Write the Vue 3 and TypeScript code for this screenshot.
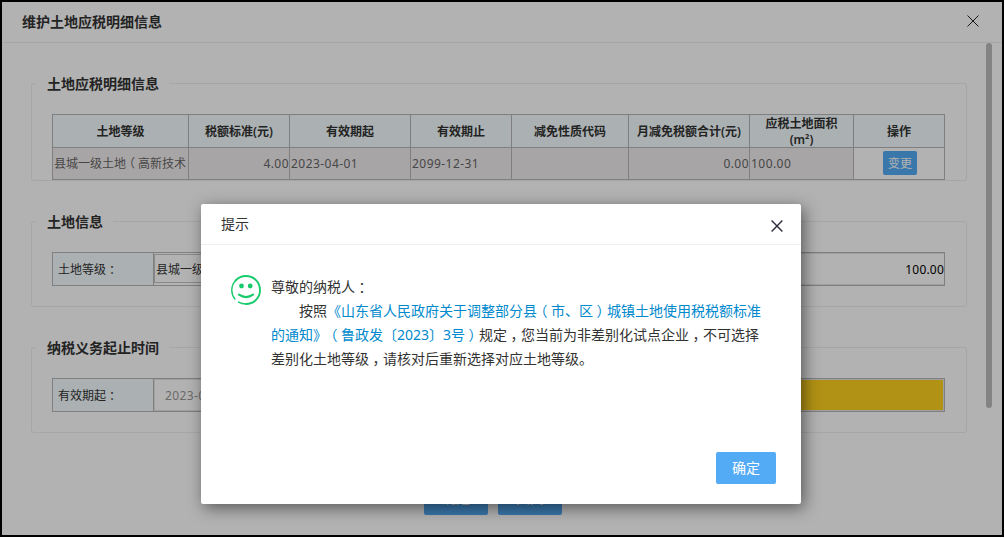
<script setup lang="ts">
import { h } from 'vue'

interface Column {
  title: string
  value: string
  align: 'left' | 'right'
}

const columns: Column[] = [
  { title: '土地等级', value: '县城一级土地（高新技术', align: 'left' },
  { title: '税额标准(元)', value: '4.00', align: 'right' },
  { title: '有效期起', value: '2023-04-01', align: 'left' },
  { title: '有效期止', value: '2099-12-31', align: 'left' },
  { title: '减免性质代码', value: '', align: 'left' },
  { title: '月减免税额合计(元)', value: '0.00', align: 'right' },
  { title: '应税土地面积(m²)', value: '100.00', align: 'left' },
]

// Full-width marks are centred in their cell.
const Cjk = (props: { text: string }) =>
  props.text
    .split(/([（），：])/)
    .filter(Boolean)
    .map((part) => (/^[（），：]$/.test(part) ? h('span', { class: 'mark' }, part) : part))
Cjk.props = ['text']
</script>

<template>
  <div class="window">
    <header class="title-bar">
      <h1>维护土地应税明细信息</h1>
      <svg class="close" width="12" height="12" viewBox="0 0 12 12">
        <path d="M.5 .5 11.5 11.5M11.5 .5 .5 11.5" fill="none" stroke="#222" stroke-width="1" />
      </svg>
    </header>

    <main class="content">
      <section class="group group-table">
        <h2>土地应税明细信息</h2>
        <div class="table">
          <div v-for="c in columns" :key="c.title" class="th">{{ c.title }}</div>
          <div class="th">操作</div>
          <div v-for="c in columns" :key="c.title + 'v'" class="td" :class="[c.align, { num: c.title !== '土地等级' }]"><Cjk :text="c.value" /></div>
          <div class="td action"><button class="mini">变更</button></div>
        </div>
      </section>

      <section class="group group-form">
        <h2>土地信息</h2>
        <div class="form-row">
          <label><Cjk text="土地等级：" /></label>
          <div class="field"><div class="input select">县城一级土地</div></div>
          <div class="field"><div class="input amount">100.00</div></div>
        </div>
      </section>

      <section class="group group-form">
        <h2>纳税义务起止时间</h2>
        <div class="form-row">
          <label><Cjk text="有效期起：" /></label>
          <div class="field"><div class="input date">2023-04-01</div></div>
          <div class="field"><div class="input required"></div></div>
        </div>
      </section>

      <div class="actions">
        <button class="btn">确定</button>
        <button class="btn">关闭</button>
      </div>
    </main>
    <div class="scroll-thumb"></div>

    <div class="shade"></div>

    <div class="dialog">
      <div class="dialog-head">
        <span>提示</span>
        <svg width="12" height="12" viewBox="0 0 12 12">
          <path d="M.6 .6 11.4 11.4M11.4 .6 .6 11.4" fill="none" stroke="#2e2d3c" stroke-width="1.4" />
        </svg>
      </div>
      <div class="dialog-body">
        <svg class="smile" width="30" height="30" viewBox="0 0 30 30">
          <g fill="none" stroke="#16cb6c" stroke-linecap="round">
            <path d="M3.9 24A14.1 14.1 0 0 1 4.6 5.5" stroke-width="1.4" />
            <path d="M4.6 5.5A14.1 14.1 0 0 1 15 1C23 1 29 7.2 29 15S23 29 15 29" stroke-width="1.9" />
            <path d="M15 29Q10.8 29 7.5 27.2" stroke-width="1.4" />
            <path d="M8 19.7Q15 24.4 22 19.7" stroke-width="2.2" />
          </g>
          <circle cx="10.5" cy="11" r="2.4" fill="#16cb6c" />
          <circle cx="19.2" cy="11" r="2.4" fill="#16cb6c" />
        </svg>
        <div class="message">
          <p><Cjk text="尊敬的纳税人：" /></p>
          <p class="indent">按照<a><Cjk text="《山东省人民政府关于调整部分县（市、区）城镇土地使用税税额标准" /></a></p>
          <p><a><Cjk text="的通知》（鲁政发〔2023〕3号）" /></a><Cjk text="规定，您当前为非差别化试点企业，不可选择" /></p>
          <p><Cjk text="差别化土地等级，请核对后重新选择对应土地等级。" /></p>
        </div>
      </div>
      <div class="dialog-foot"><button class="btn confirm">确定</button></div>
    </div>
  </div>
</template>

<style scoped>
* {
  box-sizing: border-box;
  margin: 0;
}
.window {
  position: relative;
  width: 1004px;
  height: 537px;
  border: 2px solid #000;
  background: #fff;
  overflow: hidden;
  color: #333;
  font: 12px/17px "Noto Sans", "Noto Sans CJK SC", sans-serif;
  text-spacing-trim: space-all;
}
.window :deep(.mark) {
  display: inline-block;
  width: 1em;
  text-align: center;
  font-feature-settings: "halt";
}
.title-bar {
  display: flex;
  justify-content: space-between;
  align-items: center;
  height: 41px;
  padding: 0 23px 2px 20px;
  border-bottom: 1px solid #eee;
}
h1,
h2 {
  font-size: 14px;
  line-height: 20px;
  font-weight: 600;
}
h1 {
  padding-top: 2px;
}
.close {
  display: block;
}
.content {
  padding: 40px 35px 0 29px;
}
.group {
  border: 1px solid #eee;
  border-radius: 3px;
  padding: 0 21px 0 20px;
}
h2 {
  width: max-content;
  height: 20px;
  margin: -10px 0 0 -16px;
  padding: 0 10px 0 11px;
  background: #fff;
}
.group-table {
  height: 98px;
}
.group-form {
  height: 86px;
  margin-top: 40px;
}
.table {
  display: grid;
  grid-template-columns: 136px 101px 121px 101px 117px 121px 104px 91px;
  grid-template-rows: 33px 32px;
  width: 893px;
  margin-top: 20px;
  border: solid #b6b6b6;
  border-width: 1px 0 0 1px;
}
.th,
.td {
  display: flex;
  align-items: center;
  border: solid #b6b6b6;
  border-width: 0 1px 1px 0;
  white-space: nowrap;
  overflow: hidden;
}
.th {
  justify-content: center;
  padding: 1px 15px 0;
  background: #f5fdff;
  font-weight: 600;
  line-height: 16px;
  text-align: center;
}
.th:nth-child(7) {
  white-space: normal;
}
.th:nth-child(6) {
  padding: 1px 0 0;
}
.td {
  padding: 0 1px 0 1px;
  background: #f1edee;
  color: #666;
}
.td.right {
  justify-content: flex-end;
  padding-right: 0;
}
.num {
  letter-spacing: 0.45px;
}
.td.action {
  justify-content: center;
  background: #fff;
  padding: 0 0 1px 2px;
}
button {
  border: 0;
  padding: 0;
  color: #fff;
  background: #54abf5;
  font: inherit;
}
.mini {
  width: 34px;
  height: 24px;
  border-radius: 2px;
}
.form-row {
  display: grid;
  grid-template-columns: 101px 345px 446px;
  height: 34px;
  width: 893px;
  margin-top: 20px;
  border: solid #b6b6b6;
  border-width: 1px 0 1px 1px;
}
.form-row label {
  padding-left: 5px;
  line-height: 34px;
  height: 32px;
  background: #f5fdff;
  border-right: 1px solid #b6b6b6;
}
.field {
  border-right: 1px solid #b6b6b6;
}
.input {
  height: 32px;
  border: 1px solid #e6e6e6;
  line-height: 32px;
}
.input.select {
  height: 29px;
  margin-top: 1px;
  border-color: #c4c4c4;
  padding-left: 1px;
  line-height: 30px;
}
.input.amount {
  border-right-width: 0;
  text-align: right;
  letter-spacing: 0.2px;
  color: #000;
}
.input.date {
  padding-left: 10px;
  letter-spacing: 0.4px;
  color: #999;
}
.input.required {
  background: #ffd21d;
}
.actions {
  display: flex;
  justify-content: center;
  gap: 10px;
  margin-top: 50px;
  padding-right: 12px;
}
.btn {
  width: 64px;
  height: 32px;
  padding-bottom: 2px;
  border-radius: 2px;
  font-size: 14px;
}
.actions .btn {
  padding-bottom: 4px;
}
.scroll-thumb {
  position: absolute;
  top: 41px;
  right: 10px;
  width: 6px;
  height: 365px;
  border-radius: 3px;
  background: #bcbcbc;
}
.shade {
  position: absolute;
  inset: 0;
  background: rgba(0, 0, 0, 0.3);
}
.dialog {
  position: absolute;
  left: 199px;
  top: 202px;
  display: flex;
  flex-direction: column;
  width: 600px;
  height: 300px;
  border-radius: 2px;
  background: #fff;
  box-shadow: 3px 4px 16px rgba(0, 0, 0, 0.5);
  font-size: 14px;
}
.dialog-head {
  display: flex;
  align-items: center;
  justify-content: space-between;
  height: 41px;
  padding: 0 18px 0 20px;
  border-bottom: 1px solid #eee;
}
.dialog-head span {
  padding-bottom: 2px;
}
.dialog-head svg {
  margin-top: 3px;
}
.dialog-body {
  display: flex;
  flex: 1;
  padding: 30px 30px 0;
}
.smile {
  flex: none;
  margin-right: 10px;
}
.message {
  line-height: 24px;
  white-space: nowrap;
}
.message .indent {
  padding-left: 28px;
}
.message a {
  color: #0089cd;
}
.dialog-foot {
  display: flex;
  justify-content: flex-end;
  padding: 0 25px 20px;
}
.confirm {
  width: 60px;
}
</style>
